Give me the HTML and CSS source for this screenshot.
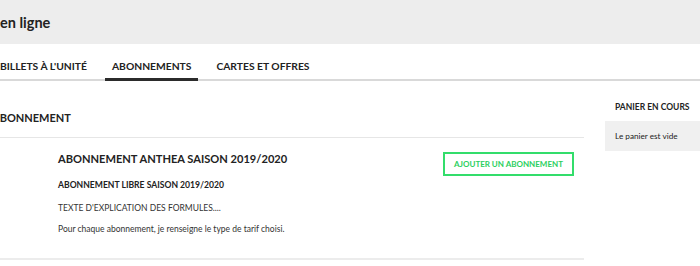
FILE: index.html
```html
<!DOCTYPE html>
<html lang="fr">
<head>
    <meta charset="UTF-8">
    <meta name="viewport" content="width=device-width, initial-scale=1.0">
    <title>Billetterie en ligne</title>
    <link rel="stylesheet" href="styles.css">
</head>
<body>
    <header class="top-bar">
        <h1>en ligne</h1>
    </header>
    <nav class="tabs">
        <a href="#" class="tab">BILLETS À L'UNITÉ</a>
        <a href="#" class="tab active">ABONNEMENTS</a>
        <a href="#" class="tab">CARTES ET OFFRES</a>
    </nav>
    <div class="page">
        <main class="catalog">
            <h2 class="section-title">ABONNEMENT</h2>
            <div class="offer">
                <div class="offer-text">
                    <h3>ABONNEMENT ANTHEA SAISON 2019/2020</h3>
                    <h4>ABONNEMENT LIBRE SAISON 2019/2020</h4>
                    <p>TEXTE D'EXPLICATION DES FORMULES....</p>
                    <p>Pour chaque abonnement, je renseigne le type de tarif choisi.</p>
                </div>
                <a href="#" class="add-button">AJOUTER UN ABONNEMENT</a>
            </div>
        </main>
        <aside class="cart">
            <h2>PANIER EN COURS</h2>
            <div class="cart-box">Le panier est vide</div>
        </aside>
    </div>
</body>
</html>
```

FILE: styles.css
```css
body {
    margin: 0;
    font-family: Lato, "Open Sans", sans-serif;
    color: #222;
    background: #fff;
    overflow: hidden;
}
.top-bar {
    height: 44px;
    background-color: #ededed;
    display: flex;
    align-items: center;
}
.top-bar h1 {
    margin: 0;
    font-size: 14.5px;
    font-weight: 700;
    color: #222;
}
.tabs {
    display: flex;
    height: 35px;
    border-bottom: 2px solid #d9d9d9;
    margin-left: -7px;
}
.tab {
    display: flex;
    align-items: flex-end;
    padding: 0 7px 6px;
    margin-right: 11px;
    margin-bottom: -2px;
    font-size: 10.3px;
    font-weight: 700;
    color: #222;
    text-decoration: none;
    border-bottom: 3px solid transparent;
}
.tab.active {
    border-bottom-color: #2b2b2b;
}
.page {
    display: flex;
    gap: 21px;
}
.catalog {
    width: 584px;
    flex-shrink: 0;
}
.section-title {
    margin: 0 0 0 -8px;
    height: 57px;
    display: flex;
    align-items: flex-end;
    padding-bottom: 13px;
    font-size: 11px;
    font-weight: 700;
    border-bottom: 1px solid #e6e6e6;
    box-sizing: border-box;
}
.offer {
    display: flex;
    justify-content: space-between;
    align-items: flex-start;
    padding: 13px 10px 23px 58px;
    border-bottom: 2px solid #ececec;
}
.offer-text h3 {
    margin: 0;
    font-size: 11.1px;
    font-weight: 700;
    line-height: 16px;
}
.offer-text h4 {
    margin: 11px 0 0;
    font-size: 8.6px;
    font-weight: 700;
    line-height: 14px;
}
.offer-text p {
    margin: 11px 0 0;
    font-size: 8.5px;
    line-height: 11px;
    color: #333;
}
.offer-text p + p {
    margin-top: 10px;
}
.add-button {
    margin-top: 1px;
    width: 127px;
    height: 20px;
    border: 2px solid #33dd6b;
    display: flex;
    align-items: center;
    justify-content: center;
    font-size: 8px;
    font-weight: 700;
    color: #2bcf5e;
    text-decoration: none;
}
.cart {
    flex: 1;
}
.cart h2 {
    margin: 0;
    height: 40px;
    display: flex;
    align-items: flex-end;
    padding: 0 0 9px 10px;
    box-sizing: border-box;
    font-size: 8.5px;
    font-weight: 700;
}
.cart-box {
    height: 30px;
    background-color: #f0f0f0;
    display: flex;
    align-items: center;
    padding-left: 10px;
    font-size: 8.2px;
}
```
